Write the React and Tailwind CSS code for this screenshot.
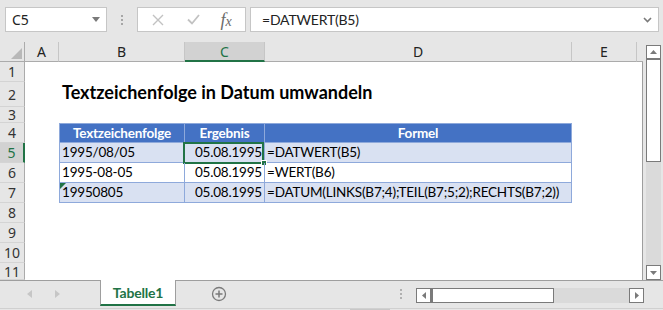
import React from 'react';

const cellFont = { fontFamily: 'Lato, "Liberation Sans", sans-serif', letterSpacing: '-0.2px' };
const titleFont = { fontFamily: 'Lato, "Liberation Sans", sans-serif' };

function ColHeader({ label, w, active }) {
  return (
    <div
      className={`${w} h-full flex items-center justify-center border-r border-[#c6c6c6] text-[14px] ${
        active ? 'bg-[#d2d2d2] text-[#217346] border-b-2 border-b-[#217346]' : 'text-[#222] border-b border-b-[#ababab]'
      }`}
    >
      {label}
    </div>
  );
}

function RowHead({ n, active }) {
  return (
    <div
      className={`w-[25px] shrink-0 h-full flex items-center justify-center text-[14px] border-b border-[#d4d4d4] ${
        active ? 'bg-[#d2d2d2] text-[#217346] border-r-2 border-r-[#217346]' : 'text-[#333] border-r border-r-[#ababab]'
      }`}
    >
      {n}
    </div>
  );
}

function Row({ n, h, active, children }) {
  return (
    <div className={`flex ${h}`}>
      <RowHead n={n} active={active} />
      <div className="flex-1 flex bg-white border-r border-[#9e9e9e]">{children}</div>
    </div>
  );
}

function EmptyCells() {
  return <div className="flex-1" />;
}

const rows = [
  { b: '1995/08/05', c: '05.08.1995', d: '=DATWERT(B5)', bg: 'bg-[#d9e1f2]' },
  { b: '1995-08-05', c: '05.08.1995', d: '=WERT(B6)', bg: 'bg-white' },
  { b: '19950805', c: '05.08.1995', d: '=DATUM(LINKS(B7;4);TEIL(B7;5;2);RECHTS(B7;2))', bg: 'bg-[#d9e1f2]' },
];

export default function App() {
  return (
    <div
      className="w-[663px] h-[310px] bg-[#e6e6e6] flex flex-col overflow-hidden"
      style={{ fontFamily: '"Noto Sans", "Open Sans", sans-serif' }}
    >
      {/* formula bar */}
      <div className="h-[42px] flex items-start pt-[7px] pl-[5px] gap-0">
        <div className="w-[102px] h-[25px] bg-white border border-[#c6c6c6] flex items-center justify-between pl-[6px] pr-[6px] text-[14px] text-[#222]">
          <span>C5</span>
          <svg width="8" height="5" viewBox="0 0 8 5">
            <path d="M0 0h8L4 5z" fill="#7a7a7a" />
          </svg>
        </div>
        <div className="w-[30px] h-[25px] flex flex-col items-center justify-center gap-[2px]">
          <span className="w-[2px] h-[2px] bg-[#a6a6a6]" />
          <span className="w-[2px] h-[2px] bg-[#a6a6a6]" />
          <span className="w-[2px] h-[2px] bg-[#a6a6a6]" />
        </div>
        <div className="w-[109px] h-[25px] bg-white border border-[#c6c6c6] flex items-center">
          <div className="w-[40px] flex justify-center">
            <svg width="12" height="12" viewBox="0 0 12 12">
              <path d="M1 1l10 10M11 1L1 11" stroke="#c2c2c2" strokeWidth="1.4" />
            </svg>
          </div>
          <div className="w-[30px] flex justify-center">
            <svg width="13" height="11" viewBox="0 0 13 11">
              <path d="M1 5.5l4 4L12 1" stroke="#c2c2c2" strokeWidth="1.8" fill="none" />
            </svg>
          </div>
          <div
            className="w-[36px] flex justify-center items-baseline italic text-[18px] text-[#6b6b6b] leading-none"
            style={{ fontFamily: '"Liberation Serif", serif' }}
          >
            f<span className="text-[14px]">x</span>
          </div>
        </div>
        <div className="ml-[4px] w-[409px] h-[25px] bg-white border border-[#c6c6c6] flex items-center justify-between pl-[11px] pr-[6px] text-[#222]">
          <span style={cellFont} className="text-[14px]">=DATWERT(B5)</span>
          <svg width="9" height="6" viewBox="0 0 9 6">
            <path d="M1 1l3.5 3.5L8 1" stroke="#7a7a7a" strokeWidth="1.6" fill="none" />
          </svg>
        </div>
      </div>

      {/* sheet + vertical scrollbar */}
      <div className="flex h-[238px]">
        <div className="w-[643px] flex flex-col">
          {/* column headers */}
          <div className="flex h-[20px]">
            <div className="w-[25px] h-full border-r border-b border-[#ababab] flex items-end justify-end p-[2px]">
              <svg width="11" height="11" viewBox="0 0 11 11">
                <path d="M11 0v11H0z" fill="#b8b8b8" />
              </svg>
            </div>
            <ColHeader label="A" w="w-[34px]" />
            <ColHeader label="B" w="w-[126px]" />
            <ColHeader label="C" w="w-[80px]" active />
            <ColHeader label="D" w="w-[307px]" />
            <ColHeader label="E" w="w-[65px]" />
            <div className="flex-1 border-b border-[#ababab]" />
          </div>

          <Row n="1" h="h-[20px]"><EmptyCells /></Row>
          <Row n="2" h="h-[25px]">
            <div className="w-[34px]" />
            <div
              className="flex items-end pb-[1px] pl-[3px] text-[18px] font-bold text-black whitespace-nowrap"
              style={titleFont}
            >
              Textzeichenfolge in Datum umwandeln
            </div>
          </Row>
          <Row n="3" h="h-[16px]"><EmptyCells /></Row>
          <Row n="4" h="h-[20px]">
            <div className="w-[34px]" />
            <div className="flex text-white font-bold text-[13.5px] bg-[#4472c4]" style={cellFont}>
              <div className="w-[126px] h-[20px] border border-[#8ea9db] flex items-center justify-center">Textzeichenfolge</div>
              <div className="w-[80px] h-[20px] border-y border-r border-[#8ea9db] flex items-center justify-center">Ergebnis</div>
              <div className="w-[307px] h-[20px] border-y border-r border-[#8ea9db] flex items-center justify-center">Formel</div>
            </div>
            <EmptyCells />
          </Row>
          {rows.map((r, i) => (
            <Row key={i} n={String(i + 5)} h="h-[20px]" active={i === 0}>
              <div className="w-[34px]" />
              <div className={`flex text-black text-[13.5px] ${r.bg}`} style={cellFont}>
                <div className="relative w-[126px] h-[20px] border-x border-b border-[#8ea9db] flex items-center pl-[2px]">
                  {i === 2 && (
                    <span className="absolute left-0 top-0 w-0 h-0 border-t-[6px] border-t-[#217346] border-r-[6px] border-r-transparent" />
                  )}
                  {r.b}
                </div>
                <div className="relative w-[80px] h-[20px] border-r border-b border-[#8ea9db] flex items-center justify-end pr-[2px]">
                  {r.c}
                  {i === 0 && (
                    <>
                      <span className="absolute -left-[2px] -top-[1px] w-[81px] h-[22px] border-2 border-[#217346]" />
                      <span className="absolute -right-[3px] -bottom-[4px] w-[6px] h-[6px] bg-[#217346] border border-white" />
                    </>
                  )}
                </div>
                <div className="w-[307px] h-[20px] border-r border-b border-[#8ea9db] flex items-center pl-[2px] whitespace-nowrap">
                  {r.d}
                </div>
              </div>
              <EmptyCells />
            </Row>
          ))}
          <Row n="8" h="h-[20px]"><EmptyCells /></Row>
          <Row n="9" h="h-[20px]"><EmptyCells /></Row>
          <Row n="10" h="h-[20px]"><EmptyCells /></Row>
          <Row n="11" h="h-[17px]"><EmptyCells /></Row>
        </div>

        {/* vertical scrollbar */}
        <div className="flex-1 flex flex-col pl-[3px] pr-[2px] pt-[3px]">
          <div className="h-[117px] bg-white border border-[#7a7a7a] flex flex-col">
            <div className="h-[14px] border-b-2 border-[#7a7a7a] flex items-center justify-center">
              <svg width="7" height="4" viewBox="0 0 7 4">
                <path d="M0 4h7L3.5 0z" fill="#7a7a7a" />
              </svg>
            </div>
          </div>
          <div className="flex-1 bg-[#dadada]" />
          <div className="h-[15px] bg-white border border-[#7a7a7a] flex items-center justify-center">
            <svg width="7" height="4" viewBox="0 0 7 4">
              <path d="M0 0h7L3.5 4z" fill="#7a7a7a" />
            </svg>
          </div>
        </div>
      </div>

      {/* bottom sheet tabs bar */}
      <div className="flex-1 flex flex-col border-t border-[#9e9e9e]">
        <div className="flex-1 flex items-start">
          <div className="w-[100px] h-[25px] flex items-center">
            <svg className="ml-[27px]" width="5" height="8" viewBox="0 0 5 8">
              <path d="M5 0v8L0 4z" fill="#c6c6c6" />
            </svg>
            <svg className="ml-[23px]" width="5" height="8" viewBox="0 0 5 8">
              <path d="M0 0v8l5-4z" fill="#c6c6c6" />
            </svg>
          </div>
          <div className="-mt-[1px] w-[76px] h-[26px] bg-white border-x border-[#9e9e9e] border-b-2 border-b-[#217346] flex items-center justify-center text-[14px] font-bold text-[#217346]" style={cellFont}>
            Tabelle1
          </div>
          <div className="ml-[35px] h-[25px] flex items-center">
            <svg width="16" height="16" viewBox="0 0 16 16">
              <circle cx="8" cy="8" r="6.5" stroke="#7a7a7a" strokeWidth="1.3" fill="none" />
              <path d="M8 4.5v7M4.5 8h7" stroke="#7a7a7a" strokeWidth="1.5" />
            </svg>
          </div>
          <div className="ml-[173px] h-[25px] flex flex-col items-center justify-center gap-[2px]">
            <span className="w-[2px] h-[2px] bg-[#b0b0b0]" />
            <span className="w-[2px] h-[2px] bg-[#b0b0b0]" />
            <span className="w-[2px] h-[2px] bg-[#b0b0b0]" />
          </div>
          <div className="ml-[14px] mt-[7px] w-[228px] h-[15px] flex">
            <div className="w-[15px] bg-white border border-[#7a7a7a] flex items-center justify-center">
              <svg width="4" height="7" viewBox="0 0 4 7">
                <path d="M4 0v7L0 3.5z" fill="#7a7a7a" />
              </svg>
            </div>
            <div className="w-[123px] bg-white border-y border-r border-[#7a7a7a] border-l-2" />
            <div className="flex-1 bg-[#dadada]" />
            <div className="w-[15px] bg-white border border-[#7a7a7a] flex items-center justify-center">
              <svg width="4" height="7" viewBox="0 0 4 7">
                <path d="M0 0v7l4-3.5z" fill="#7a7a7a" />
              </svg>
            </div>
          </div>
        </div>
        <div className="h-[2px] border-t border-[#d0d0d0] flex">
          <div className="ml-[350px] w-[40px] bg-[#c8c8c8]" />
        </div>
      </div>
    </div>
  );
}
